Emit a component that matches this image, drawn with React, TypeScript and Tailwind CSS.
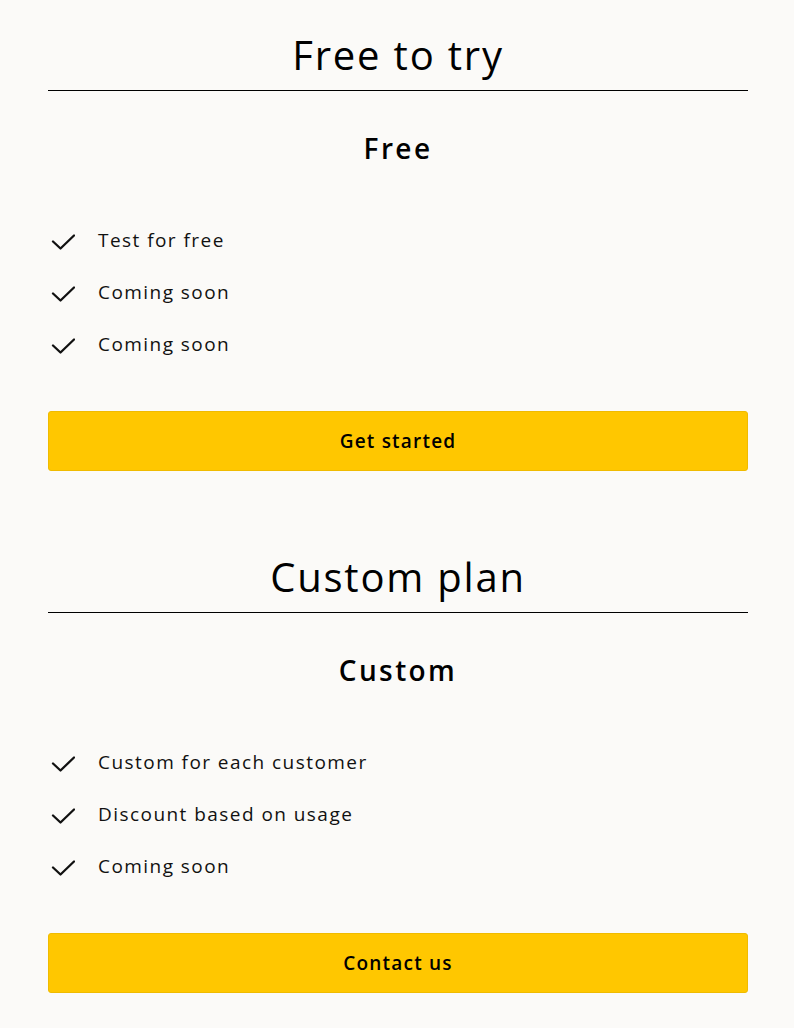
const plans = [
  {
    heading: 'Free to try',
    name: 'Free',
    features: ['Test for free', 'Coming soon', 'Coming soon'],
    cta: 'Get started',
  },
  {
    heading: 'Custom plan',
    name: 'Custom',
    features: ['Custom for each customer', 'Discount based on usage', 'Coming soon'],
    cta: 'Contact us',
  },
]

function CheckMark() {
  return (
    <svg width="24" height="16" viewBox="0 0 24 16" fill="none" className="shrink-0">
      <path d="M2 7.5 9.5 14.5 23 1.5" stroke="#111" strokeWidth="2.3" strokeLinecap="round" strokeLinejoin="round" />
    </svg>
  )
}

function PlanSection({ plan }: { plan: (typeof plans)[number] }) {
  return (
    <section className="flex flex-col">
      <h2 className="border-b border-black pb-[11px] text-center text-[40px] font-normal leading-[48px] tracking-[1.8px] text-black">
        {plan.heading}
      </h2>
      <h3 className="mt-[39px] text-center text-[28px] font-semibold leading-[36px] tracking-[2.4px] text-black">
        {plan.name}
      </h3>
      <ul className="mt-[60px] flex flex-col gap-6">
        {plan.features.map((f, i) => (
          <li key={i} className="flex h-7 items-center">
            <div className="flex w-[50px] pl-[3px] pt-1">
              <CheckMark />
            </div>
            <span className="text-[19px] leading-7 tracking-[1.45px] text-[#111]">{f}</span>
          </li>
        ))}
      </ul>
      <button className="mt-[53px] h-[60px] w-full rounded-[3px] border border-[#f0bb00] bg-[#ffc700] text-[19px] font-semibold tracking-[1.2px] text-black">
        {plan.cta}
      </button>
    </section>
  )
}

export default function App() {
  return (
    <div
      className="min-h-[1028px] bg-[#fbfaf8] pl-12 pr-[46px] pt-[31px]"
      style={{ fontFamily: '"Open Sans", "DejaVu Sans", sans-serif' }}
    >
      <div className="flex flex-col gap-[82px]">
        {plans.map((p) => (
          <PlanSection key={p.heading} plan={p} />
        ))}
      </div>
    </div>
  )
}
